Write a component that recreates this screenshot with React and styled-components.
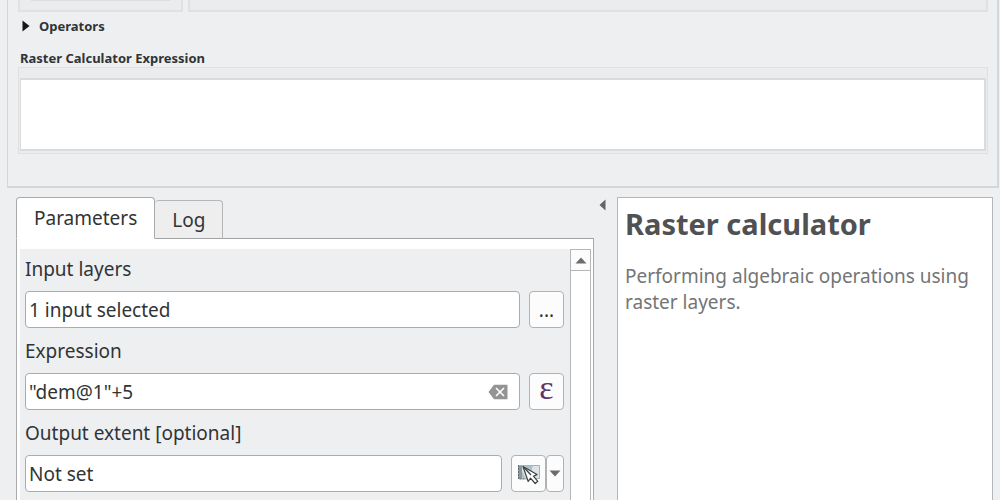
import React, { useState } from "react";
import styled, { createGlobalStyle } from "styled-components";

const App = () => {
  const [tab, setTab] = useState("parameters");
  const [layers, setLayers] = useState("1 input selected");
  const [expression, setExpression] = useState('"dem@1"+5');
  const [extent, setExtent] = useState("Not set");

  return (
    <>
      <GlobalStyle />
      <Window>
        <CalculatorPanel>
          <TopFrames>
            <Frame $width="165px">
              <FrameList />
            </Frame>
            <Frame />
          </TopFrames>
          <GroupToggle type="button">
            <svg width="8" height="12" viewBox="0 0 8 12" aria-hidden="true">
              <path d="M0.5 0.5L7.5 6L0.5 11.5Z" fill="#151719" />
            </svg>
            Operators
          </GroupToggle>
          <GroupLabel htmlFor="raster-expression">
            Raster Calculator Expression
          </GroupLabel>
          <ExpressionFrame>
            <ExpressionArea id="raster-expression" />
          </ExpressionFrame>
        </CalculatorPanel>

        <Dialog>
          <Main>
            <Tabs role="tablist">
              <Tab
                type="button"
                role="tab"
                aria-selected={tab === "parameters"}
                $active={tab === "parameters"}
                onClick={() => setTab("parameters")}
              >
                Parameters
              </Tab>
              <Tab
                type="button"
                role="tab"
                aria-selected={tab === "log"}
                $active={tab === "log"}
                onClick={() => setTab("log")}
              >
                Log
              </Tab>
              <TabsRest />
            </Tabs>
            <Pane>
              <Form>
                <Label htmlFor="layers">Input layers</Label>
                <Row>
                  <Field>
                    <Input
                      id="layers"
                      value={layers}
                      onChange={(e) => setLayers(e.target.value)}
                    />
                  </Field>
                  <ToolButton type="button">...</ToolButton>
                </Row>

                <Label htmlFor="expression">Expression</Label>
                <Row>
                  <Field>
                    <Input
                      id="expression"
                      value={expression}
                      onChange={(e) => setExpression(e.target.value)}
                    />
                    <ClearButton
                      type="button"
                      aria-label="Clear"
                      onClick={() => setExpression("")}
                    >
                      <ClearIcon />
                    </ClearButton>
                  </Field>
                  <EpsilonButton type="button">ε</EpsilonButton>
                </Row>

                <Label htmlFor="extent">Output extent [optional]</Label>
                <Row>
                  <Field>
                    <Input
                      id="extent"
                      value={extent}
                      onChange={(e) => setExtent(e.target.value)}
                    />
                  </Field>
                  <SplitButton>
                    <ToolButton type="button" aria-label="Set extent">
                      <ExtentIcon />
                    </ToolButton>
                    <ToolButton type="button" aria-label="Extent menu" $narrow>
                      <svg width="12" height="7" viewBox="0 0 12 7">
                        <path d="M0.5 0.5H11.5L6 6.5Z" fill="#6c6c6c" />
                      </svg>
                    </ToolButton>
                  </SplitButton>
                </Row>
              </Form>
              <ScrollBar>
                <ScrollUp type="button" aria-label="Scroll up">
                  <svg width="12" height="7" viewBox="0 0 12 7">
                    <path d="M0.5 6.5H11.5L6 0.5Z" fill="#6c6c6c" />
                  </svg>
                </ScrollUp>
              </ScrollBar>
            </Pane>
          </Main>
          <Splitter>
            <CollapseButton type="button" aria-label="Collapse help">
              <svg width="7" height="12" viewBox="0 0 7 12">
                <path d="M6.5 0.5L0.5 6L6.5 11.5Z" fill="#636566" />
              </svg>
            </CollapseButton>
          </Splitter>
          <Help>
            <HelpTitle>Raster calculator</HelpTitle>
            <HelpText>
              Performing algebraic operations using raster layers.
            </HelpText>
          </Help>
        </Dialog>
      </Window>
    </>
  );
};

const ClearIcon = () => (
  <svg width="20" height="16" viewBox="0 0 20 16" aria-hidden="true">
    <path d="M0.5 8L6 0.8H19.5V15.2H6Z" fill="#949494" />
    <path
      d="M8 4L16 12M16 4L8 12"
      stroke="#fff"
      strokeWidth="1.6"
      fill="none"
    />
  </svg>
);

const ExtentIcon = () => (
  <svg width="24" height="22" viewBox="0 0 24 22" aria-hidden="true">
    <rect x="1" y="2" width="22" height="14" fill="#dde3e6" />
    <path d="M1 2h4v14H1z" fill="#8b959b" />
    <path d="M8 2h8l-2 8-4-1z" fill="#a9c0cf" />
    <path d="M5 8l4 8H5z" fill="#b5bfc5" />
    <path d="M1.5 2.5H22.5V15.5H18" stroke="#adb2b5" fill="none" />
    <path d="M1.5 2v14h8" stroke="#666e73" strokeDasharray="2 1" fill="none" />
    <path
      d="M6 3.5L11.2 18.5L13.5 15.2L18.2 20.5L20.8 18.3L16.4 13.2L20 11.6Z"
      fill="#fff"
      stroke="#3b4043"
      strokeWidth="1.2"
      strokeLinejoin="round"
    />
    <path d="M6.5 4L14 12" stroke="#3b4043" strokeWidth="1.2" />
  </svg>
);

const GlobalStyle = createGlobalStyle`
  * {
    box-sizing: border-box;
  }
  body {
    margin: 0;
    background: #eeeff1;
    color: #303436;
    font-family: "Noto Sans", sans-serif;
    font-size: 19px;
  }
  button, input, textarea {
    font: inherit;
    color: inherit;
  }
`;

const Window = styled.div`
  display: flex;
  flex-direction: column;
  height: 100vh;
  overflow: hidden;
`;

const CalculatorPanel = styled.section`
  display: flex;
  flex-direction: column;
  margin: 0 1px 0 7px;
  padding: 0 9px 32px 10px;
  border: 2px solid #d5d6d7;
  border-width: 0 2px 2px 1px;
`;

const TopFrames = styled.div`
  display: flex;
  gap: 5px;
  height: 12px;
`;

const Frame = styled.div`
  flex: ${(props) => (props.$width ? `0 0 ${props.$width}` : "1")};
  padding: 0 11px;
  background: #ebecee;
  border: 2px solid #e0e1e3;
  border-top: none;
`;

const FrameList = styled.div`
  height: 1px;
  background: #dcdddf;
`;

const GroupToggle = styled.button`
  display: flex;
  align-items: center;
  align-self: flex-start;
  gap: 9px;
  height: 28px;
  padding: 0 4px;
  border: none;
  background: none;
  font-size: 13px;
  font-weight: bold;
`;

const GroupLabel = styled.label`
  padding: 9px 2px 0;
  font-size: 13px;
  font-weight: bold;
  line-height: 18px;
`;

const ExpressionFrame = styled.div`
  display: flex;
  padding: 10px 1px 2px 1px;
  border: 1px solid #dfe0e2;
  background: #ebecee;
`;

const ExpressionArea = styled.textarea`
  flex: 1;
  height: 73px;
  border: 2px solid #dadbdd;
  border-width: 2px 2px 2px 1px;
  background: #fff;
  outline: none;
  resize: none;
`;

const Dialog = styled.div`
  display: flex;
  flex: 1;
  min-height: 0;
  padding: 9px 7px 0 16px;
`;

const Main = styled.div`
  display: flex;
  flex: 578 1 0;
  flex-direction: column;
`;

const Tabs = styled.div`
  display: flex;
  align-items: flex-end;
  height: 42px;
`;

const Tab = styled.button`
  height: ${(props) => (props.$active ? "42px" : "39px")};
  padding: 0 17px;
  border: 1px solid ${(props) => (props.$active ? "#a8aaab" : "#b4b6b7")};
  border-bottom-color: ${(props) => (props.$active ? "#fff" : "#a0a2a3")};
  border-radius: 4px 4px 0 0;
  background: ${(props) => (props.$active ? "#fff" : "#eeeeee")};

  & + & {
    border-left-width: 0;
  }
`;

const TabsRest = styled.div`
  flex: 1;
  align-self: stretch;
  border-bottom: 1px solid #a0a2a3;
`;

const Pane = styled.div`
  display: flex;
  flex: 1;
  padding: 10px 2px 0 3px;
  background: #fff;
  border: 1px solid #a8aaab;
  border-width: 0 1px;
`;

const Form = styled.form`
  flex: 1;
  padding: 0 6px 0 5px;
  background: #eeeff1;
`;

const Label = styled.label`
  display: block;
  padding-top: 7px;
  height: 42px;
  line-height: 27px;

  div + & {
    padding-top: 10px;
    height: 45px;
  }
`;

const Row = styled.div`
  display: flex;
  gap: 9px;
`;

const Field = styled.div`
  display: flex;
  flex: 1;
  align-items: center;
  height: 37px;
  padding: 0 11px 0 3px;
  border: 1px solid #a9abac;
  border-radius: 4px;
  background: #fff;
`;

const Input = styled.input`
  flex: 1;
  min-width: 0;
  padding: 0;
  border: none;
  outline: none;
  background: none;
`;

const ClearButton = styled.button`
  display: flex;
  padding: 0;
  border: none;
  background: none;
`;

const ToolButton = styled.button`
  display: flex;
  align-items: center;
  justify-content: center;
  width: ${(props) => (props.$narrow ? "18px" : "35px")};
  height: 37px;
  padding: 0;
  border: 1px solid #b0b2b3;
  border-radius: 4px;
  background: #fcfcfc;
`;

const EpsilonButton = styled(ToolButton)`
  padding-bottom: 8px;
  color: #5b3565;
  font-family: "Liberation Serif", serif;
  font-size: 34px;
`;

const SplitButton = styled.div`
  display: flex;
`;

const ScrollBar = styled.div`
  width: 21px;
  border: 1px solid #b4b6b7;
  border-bottom: none;
  background: #fff;
`;

const ScrollUp = styled.button`
  display: flex;
  align-items: center;
  justify-content: center;
  width: 100%;
  height: 21px;
  padding: 0;
  border: none;
  border-bottom: 1px solid #b4b6b7;
  background: #fcfcfc;
`;

const Splitter = styled.div`
  width: 23px;
  padding: 2px 0 0 5px;
`;

const CollapseButton = styled.button`
  display: flex;
  padding: 0;
  border: none;
  background: none;
`;

const Help = styled.aside`
  flex: 360 1 0;
  padding: 6px 7px;
  border: 1px solid #b4b6b7;
  border-bottom: none;
  background: #fff;
`;

const HelpTitle = styled.h1`
  margin: 0 0 20px;
  color: #505152;
  font-size: 29px;
  line-height: 39px;
`;

const HelpText = styled.p`
  margin: 0;
  color: #747576;
  line-height: 26px;
`;

export default App;
